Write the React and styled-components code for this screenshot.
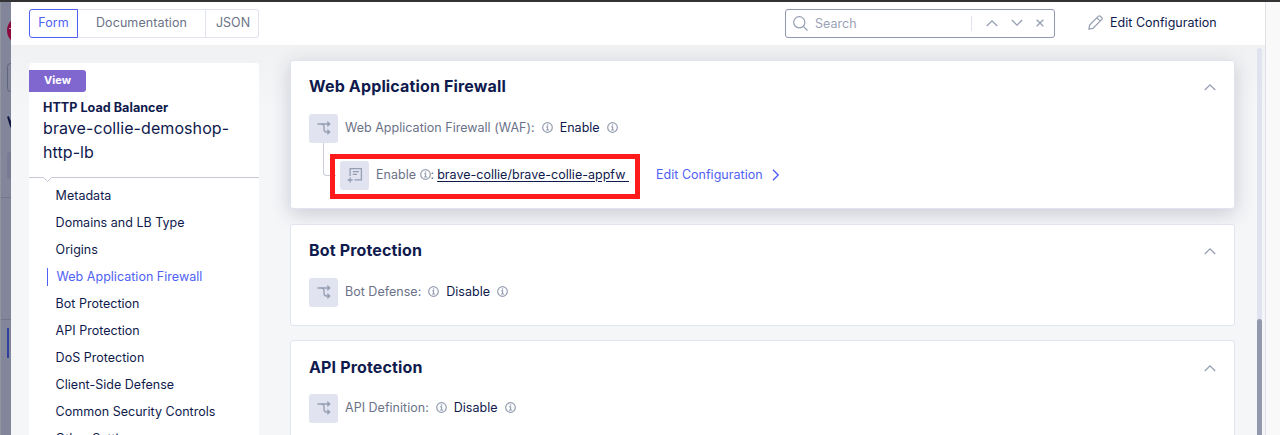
import React from "react";
import styled, { createGlobalStyle, css } from "styled-components";

const navy = "#0f1a4d";
const blue = "#4f61f5";
const muted = "#6b7288";
const iconGray = "#959eb2";
const line = "#e1e3f1";

const GlobalStyle = createGlobalStyle`
  * { box-sizing: border-box; }
  body {
    margin: 0;
    overflow: hidden;
    font-family: Inter, "Liberation Sans", sans-serif;
    font-size: 12.5px;
    letter-spacing: 0.02px;
    color: ${navy};
  }
  svg { display: block; flex: none; }
`;

const Page = styled.div`
  width: 1280px;
  height: 435px;
  display: flex;
  border-top: 2px solid #333235;
  overflow: hidden;
  background: #f9f9fa;
`;

const Backdrop = styled.div`
  flex: none;
  width: 11px;
  height: 433px;
  background: #82869a;
  border-left: 1px solid #92959f;
`;

const Panel = styled.main`
  flex: none;
  width: 1255px;
  height: 433px;
  display: flex;
  flex-direction: column;
  background: #f5f6f8;
  border-right: 1px solid #dfe0e6;
`;

const Header = styled.header`
  flex: none;
  height: 43px;
  display: flex;
  align-items: flex-start;
  padding: 7px 46px 0 18px;
  background: #fff;
`;

const Tabs = styled.div`
  display: flex;
  height: 29px;
`;

const Tab = styled.button`
  width: ${(p) => p.$width}px;
  padding: 0 0 2px;
  border: 1px solid ${line};
  border-left-width: 0;
  background: #fff;
  font: inherit;
  letter-spacing: ${(p) => p.$spacing || 0}px;
  color: ${muted};
  &:last-child {
    padding-left: 2px;
    border-radius: 0 3px 3px 0;
  }
  ${(p) =>
    p.$active &&
    css`
      border: 1px solid ${blue};
      border-radius: 3px 0 0 3px;
      color: ${blue};
    `}
`;

const Search = styled.div`
  display: flex;
  align-items: center;
  width: 270px;
  height: 29px;
  margin-left: auto;
  padding-left: 7px;
  border: 1px solid #8f98ad;
  border-radius: 3px;
`;

const Placeholder = styled.span`
  flex: 1;
  padding-left: 7px;
  color: #9ba3b6;
`;

const SearchTools = styled.div`
  display: flex;
  align-items: center;
  gap: 13px;
  width: 83px;
  height: 15px;
  padding: 0 0 1px 14px;
  border-left: 1px solid ${line};
`;

const EditButton = styled.div`
  display: flex;
  align-items: center;
  gap: 7px;
  width: 131px;
  height: 26px;
  margin-left: 33px;
`;

const Body = styled.div`
  flex: 1;
  min-height: 0;
  display: flex;
  overflow: hidden;
  background: linear-gradient(#f0f1f2, #f5f6f8 60px);
`;

const Sidebar = styled.aside`
  flex: none;
  width: 230px;
  height: 420px;
  margin: 18px 0 0 18px;
  padding-top: 7px;
  border-radius: 3px;
  background: #fff;
`;

const Badge = styled.div`
  width: 57px;
  height: 22px;
  border-radius: 0 3px 3px 0;
  background: #8067d0;
  color: #fff;
  font-size: 11px;
  font-weight: 700;
  line-height: 21px;
  text-align: center;
`;

const ObjectType = styled.div`
  margin: 7px 14px 0;
  font-weight: 700;
  font-size: 12.6px;
  line-height: 18px;
`;

const ObjectName = styled.div`
  margin: -1px 14px 0;
  font-size: 16px;
  letter-spacing: 0.08px;
  line-height: 24px;
`;

const Divider = styled.div`
  margin-top: 13px;
`;

const Nav = styled.nav`
  padding-top: 2px;
`;

const NavItem = styled.div`
  height: 18px;
  margin: 0 0 9px 18px;
  padding: 1px 0 0 8.600px;
  line-height: 16px;
  ${(p) =>
    p.$active &&
    css`
      border-left: 1px solid ${blue};
      color: ${blue};
    `}
`;

const Content = styled.section`
  flex: none;
  width: 945px;
  margin: 15px 0 0 31px;
`;

const Card = styled.article`
  height: ${(p) => p.$height}px;
  margin-bottom: ${(p) => p.$gap || 14}px;
  padding: 0 18px;
  border: 1px solid ${line};
  border-radius: 3px;
  background: #fff;
  ${(p) => p.$raised && css`box-shadow: 0 5px 20px rgba(30, 35, 70, 0.2);`}
`;

const CardHead = styled.div`
  display: flex;
  align-items: center;
  justify-content: space-between;
  height: 53px;
  padding-right: 0.500px;
`;

const CardTitle = styled.h2`
  margin: 0;
  padding-bottom: ${(p) => p.$lift}px;
  font-size: 16px;
  font-weight: 700;
  letter-spacing: 0.15px;
`;

const CollapseToggle = styled.span`
  padding-bottom: ${(p) => p.$lift}px;
`;

const Field = styled.div`
  display: flex;
  align-items: center;
  height: 29px;
  color: ${muted};
`;

const IconBox = styled.div`
  flex: none;
  display: flex;
  align-items: center;
  justify-content: center;
  width: 29px;
  height: 29px;
  margin-right: 7px;
  padding-bottom: 1.500px;
  border-radius: 3px;
  background: ${line};
`;

const Label = styled.span`
  white-space: nowrap;
`;

const FieldText = styled.div`
  display: flex;
  align-items: center;
  padding-bottom: 2px;
`;

const Value = styled.span`
  color: ${navy};
`;

const InfoSlot = styled.span`
  margin: 0 7px;
`;

const Subfield = styled.div`
  display: flex;
  align-items: flex-start;
  padding-left: 14px;
`;

const Connector = styled.div`
  flex: none;
  width: 8px;
  height: 33px;
  border: solid #c9ccda;
  border-width: 0 0 1px 1px;
  border-radius: 0 0 0 4px;
`;

const ConnectorEnd = styled.span`
  width: 1px;
  height: 1px;
  margin-right: 4px;
  background: #c9ccda;
`;

const Highlight = styled.div`
  display: flex;
  align-items: center;
  flex: none;
  width: 310px;
  height: 45px;
  margin: 11px 0 0 -1px;
  padding-bottom: 2px;
  border: 5px solid #ff1a1c;
  color: ${muted};
`;

const ObjectLink = styled.a`
  margin-left: 3px;
  color: ${navy};
  text-decoration: underline;
  text-underline-offset: 2px;
  white-space: pre;
`;

const EditLink = styled.a`
  display: flex;
  align-items: center;
  gap: 9px;
  height: 29px;
  margin: 17px 0 0 16px;
  color: ${blue};
`;

const Scrollbar = styled.div`
  width: 5px;
  height: 400px;
  margin: 3px 0 0 22px;
  padding-top: 271px;
  border-radius: 3px;
  background: #e1e2ef;
`;

const Thumb = styled.div`
  height: 129px;
  border-radius: 3px 3px 0 0;
  background: #9299af;
`;

const BackdropArt = () => (
  <svg width="10" height="433" viewBox="1 2 10 433">
    <circle cx="21" cy="30.500" r="14" fill="#8b0a3d" />
    <path d="M9 28.500h2" stroke="#b9a2b4" />
    <rect x="7.500" y="63.500" width="18" height="28" rx="3" fill="none" stroke="#60657f" />
    <path d="M8 116.500l2.500 8 2-7" fill="none" stroke="#0d1440" strokeWidth="2" />
    <rect x="7" y="152" width="18" height="27" rx="3" fill="#777b94" />
    <path d="M1 197.500h10M1 319.500h10" stroke="#72768c" />
    <rect x="7" y="328" width="2" height="30" fill="#303f9e" />
  </svg>
);

const Chevron = ({ down }) => (
  <svg width="12" height="8" viewBox="0 0 12 8" fill="none" stroke={iconGray} strokeWidth="1.3">
    <path d={down ? "M.8 1l5.200 5.200L11.200 1" : "M.8 7L6 1.800 11.200 7"} />
  </svg>
);

const Info = () => (
  <svg width="11" height="11" viewBox="0 0 11 11" fill="none" stroke={iconGray}>
    <circle cx="5.500" cy="5.500" r="4.800" strokeWidth="1.200" />
    <path d="M4.200 4.900h1.400v3M4 8h3.200" strokeWidth="1.100" />
    <path d="M4.900 3h1.300" strokeWidth="1.300" />
  </svg>
);

const Branch = () => (
  <svg width="14" height="14" viewBox="0 0 14 14" fill="none" stroke={iconGray} strokeWidth="1.300">
    <path d="M.5 3h12M10.300.7L12.700 3l-2.400 2.300" />
    <path d="M4.500 3.100c2.200 0 2.500 1 2.500 2.500v2.600c0 2 .8 2.800 2.500 2.800h3M10.300 8.700l2.400 2.300-2.400 2.300" />
  </svg>
);

const FormIcon = () => (
  <svg width="16" height="16" viewBox="0 0 16 16" fill="none" stroke={iconGray} strokeWidth="1.300">
    <path d="M3.100 9V1.600h11.300v11.300H7.500M5.800 4.600h6.200M5.800 7.300h4.200M3.100 10.500v5M.6 13h5" />
  </svg>
);

const SearchIcon = () => (
  <svg width="15" height="15" viewBox="0 0 15 15" fill="none" stroke={iconGray} strokeWidth="1.200">
    <circle cx="6.300" cy="6.300" r="5.600" />
    <path d="M10.300 10.300l4.200 4.200" />
  </svg>
);

const Pencil = () => (
  <svg width="15" height="15" viewBox="0 0 15 15" fill="none" stroke={iconGray} strokeWidth="1.200" strokeLinejoin="round">
    <path d="M.8 14.200l.9-4.200L10.200 1.400c.8-.8 1.600-.8 2.300-.1l1.200 1.200c.7.700.7 1.500 0 2.200L5 13.300zM8.900 2.800l3.400 3.400" />
  </svg>
);

const sections = [
  { name: "Metadata" },
  { name: "Domains and LB Type" },
  { name: "Origins" },
  { name: "Web Application Firewall", active: true },
  { name: "Bot Protection" },
  { name: "API Protection" },
  { name: "DoS Protection" },
  { name: "Client-Side Defense" },
  { name: "Common Security Controls" },
  { name: "Other Settings" },
];

const SettingField = ({ label, value }) => (
  <Field>
    <IconBox><Branch /></IconBox>
    <FieldText>
      <Label>{label}</Label>
      <InfoSlot><Info /></InfoSlot>
      <Value>{value}</Value>
      <InfoSlot><Info /></InfoSlot>
    </FieldText>
  </Field>
);

const Heading = ({ children, lift = 3 }) => (
  <CardHead>
    <CardTitle $lift={lift}>{children}</CardTitle>
    <CollapseToggle $lift={lift === 3 ? 1.5 : 0}><Chevron /></CollapseToggle>
  </CardHead>
);

export default function App() {
  return (
    <>
      <GlobalStyle />
      <Page>
        <Backdrop><BackdropArt /></Backdrop>
        <Panel>
          <Header>
            <Tabs>
              <Tab $active $width={49} $spacing={0.1}>Form</Tab>
              <Tab $width={128} $spacing={0.1}>Documentation</Tab>
              <Tab $width={53}>JSON</Tab>
            </Tabs>
            <Search>
              <SearchIcon />
              <Placeholder>Search</Placeholder>
              <SearchTools>
                <Chevron />
                <Chevron down />
                <svg width="8" height="8" viewBox="0 0 8 8" stroke={iconGray} strokeWidth="1.300">
                  <path d="M.7.700l6.600 6.600M7.300.700L.7 7.300" />
                </svg>
              </SearchTools>
            </Search>
            <EditButton>
              <Pencil />
              <Label>Edit Configuration</Label>
            </EditButton>
          </Header>
          <Body>
            <Sidebar>
              <Badge>View</Badge>
              <ObjectType>HTTP Load Balancer</ObjectType>
              <ObjectName>brave-collie-demoshop-http-lb</ObjectName>
              <Divider>
                <svg width="230" height="8" viewBox="0 0 230 8" fill="none" stroke="#c5c8d6">
                  <path d="M0 .5h14.500l4 4 4-4H230" />
                </svg>
              </Divider>
              <Nav>
                {sections.map((s) => (
                  <NavItem key={s.name} $active={s.active}>{s.name}</NavItem>
                ))}
              </Nav>
            </Sidebar>
            <Content>
              <Card $height={149} $gap={15} $raised>
                <Heading>Web Application Firewall</Heading>
                <SettingField label="Web Application Firewall (WAF):" value="Enable" />
                <Subfield>
                  <Connector />
                  <Highlight>
                    <ConnectorEnd />
                    <IconBox><FormIcon /></IconBox>
                    <FieldText>
                      <Label>Enable&nbsp;</Label>
                      <Info />
                      <Label>:</Label>
                      <ObjectLink>{"brave-collie/brave-collie-appfw "}</ObjectLink>
                    </FieldText>
                  </Highlight>
                  <EditLink>
                    <Label>Edit Configuration</Label>
                    <svg width="8" height="12" viewBox="0 0 8 12" fill="none" stroke={blue} strokeWidth="1.400">
                      <path d="M1 .8L6.200 6 1 11.200" />
                    </svg>
                  </EditLink>
                </Subfield>
              </Card>
              <Card $height={102}>
                <Heading>Bot Protection</Heading>
                <SettingField label="Bot Defense:" value="Disable" />
              </Card>
              <Card $height={120}>
                <Heading lift={2}>API Protection</Heading>
                <SettingField label="API Definition:" value="Disable" />
              </Card>
            </Content>
            <Scrollbar><Thumb /></Scrollbar>
          </Body>
        </Panel>
      </Page>
    </>
  );
}
